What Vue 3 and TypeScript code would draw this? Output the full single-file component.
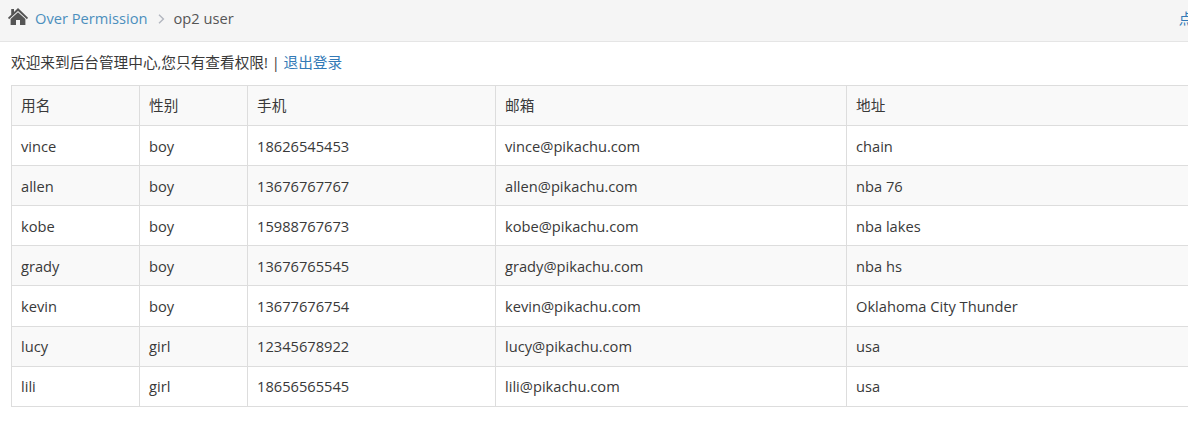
<script setup lang="ts">
interface UserRow {
  name: string
  sex: string
  phone: string
  email: string
  address: string
}

const users: UserRow[] = [
  { name: 'vince', sex: 'boy', phone: '18626545453', email: 'vince@pikachu.com', address: 'chain' },
  { name: 'allen', sex: 'boy', phone: '13676767767', email: 'allen@pikachu.com', address: 'nba 76' },
  { name: 'kobe', sex: 'boy', phone: '15988767673', email: 'kobe@pikachu.com', address: 'nba lakes' },
  { name: 'grady', sex: 'boy', phone: '13676765545', email: 'grady@pikachu.com', address: 'nba hs' },
  { name: 'kevin', sex: 'boy', phone: '13677676754', email: 'kevin@pikachu.com', address: 'Oklahoma City Thunder' },
  { name: 'lucy', sex: 'girl', phone: '12345678922', email: 'lucy@pikachu.com', address: 'usa' },
  { name: 'lili', sex: 'girl', phone: '18656565545', email: 'lili@pikachu.com', address: 'usa' },
]
</script>

<template>
  <div class="page">
    <div class="breadcrumbs">
      <svg class="home" viewBox="0 0 26 20" width="20" height="17" preserveAspectRatio="none">
        <path d="M13 0 L26 11.4 L24.6 13.2 L13 3.6 L1.4 13.2 L0 11.4 L4.2 7.8 V1.2 H7.8 V4.7 Z" />
        <path d="M13 4.9 L22.6 12.8 V20 H15.6 V14 H10.4 V20 H3.4 V12.8 Z" />
      </svg>
      <a class="crumb-link" href="#">Over Permission</a>
      <span class="sep">
        <svg viewBox="0 0 7 10" width="7" height="10"><path d="M1 0.8 L5.4 5 L1 9.2" /></svg>
      </span>
      <span class="crumb">op2 user</span>
      <a class="tip" href="#">点一下提示</a>
    </div>
    <p class="welcome">欢迎来到后台管理中心,您只有查看权限! <span class="bar">|</span> <a href="#">退出登录</a></p>
    <table class="users">
      <colgroup>
        <col class="c1" />
        <col class="c2" />
        <col class="c3" />
        <col class="c4" />
        <col class="c5" />
      </colgroup>
      <tbody>
        <tr class="head">
          <td>用名</td>
          <td>性别</td>
          <td>手机</td>
          <td>邮箱</td>
          <td>地址</td>
        </tr>
        <tr v-for="u in users" :key="u.name">
          <td>{{ u.name }}</td>
          <td>{{ u.sex }}</td>
          <td>{{ u.phone }}</td>
          <td>{{ u.email }}</td>
          <td>{{ u.address }}</td>
        </tr>
      </tbody>
    </table>
  </div>
</template>

<style>
html,
body {
  margin: 0;
  background: #fff;
  overflow: hidden;
}
</style>

<style scoped>
.page {
  width: 1188px;
  height: 434px;
  overflow: hidden;
  font-family: "Open Sans", "Noto Sans CJK SC", sans-serif;
  font-size: 14.67px;
  color: #393939;
}

.breadcrumbs {
  display: flex;
  align-items: center;
  box-sizing: border-box;
  height: 42px;
  padding-left: 8px;
  padding-bottom: 6px;
  background: #f5f5f5;
  border-bottom: 1px solid #e5e5e5;
  color: #555;
}

.home {
  fill: #555;
  margin-right: 7px;
  margin-top: -2px;
}

.crumb-link {
  color: #4c8fbd;
  text-decoration: none;
}

.sep {
  display: flex;
  margin: 2px 9px 0 10px;
}

.sep path {
  fill: none;
  stroke: #b2b6bf;
  stroke-width: 1.4;
}

.tip {
  margin-left: auto;
  margin-right: -64px;
  color: #337ab7;
  text-decoration: none;
  white-space: nowrap;
  flex-shrink: 0;
}

.welcome {
  margin: 0;
  height: 43px;
  padding-left: 11px;
  line-height: 41px;
  color: #393939;
  white-space: nowrap;
}

.welcome a {
  color: #337ab7;
  text-decoration: none;
}

.users {
  margin-left: 11px;
  border-collapse: collapse;
  table-layout: fixed;
  width: 1300px;
}

.c1 {
  width: 128px;
}

.c2 {
  width: 108px;
}

.c3 {
  width: 248px;
}

.c4 {
  width: 351px;
}

.users td {
  height: 40.094px;
  box-sizing: border-box;
  padding: 0 9px;
  border: 1px solid #ddd;
  line-height: 20px;
  color: #393939;
  white-space: nowrap;
}

.users .head td {
  padding-bottom: 2px;
}

.users tr:nth-child(odd) td {
  background: #f9f9f9;
}
</style>
